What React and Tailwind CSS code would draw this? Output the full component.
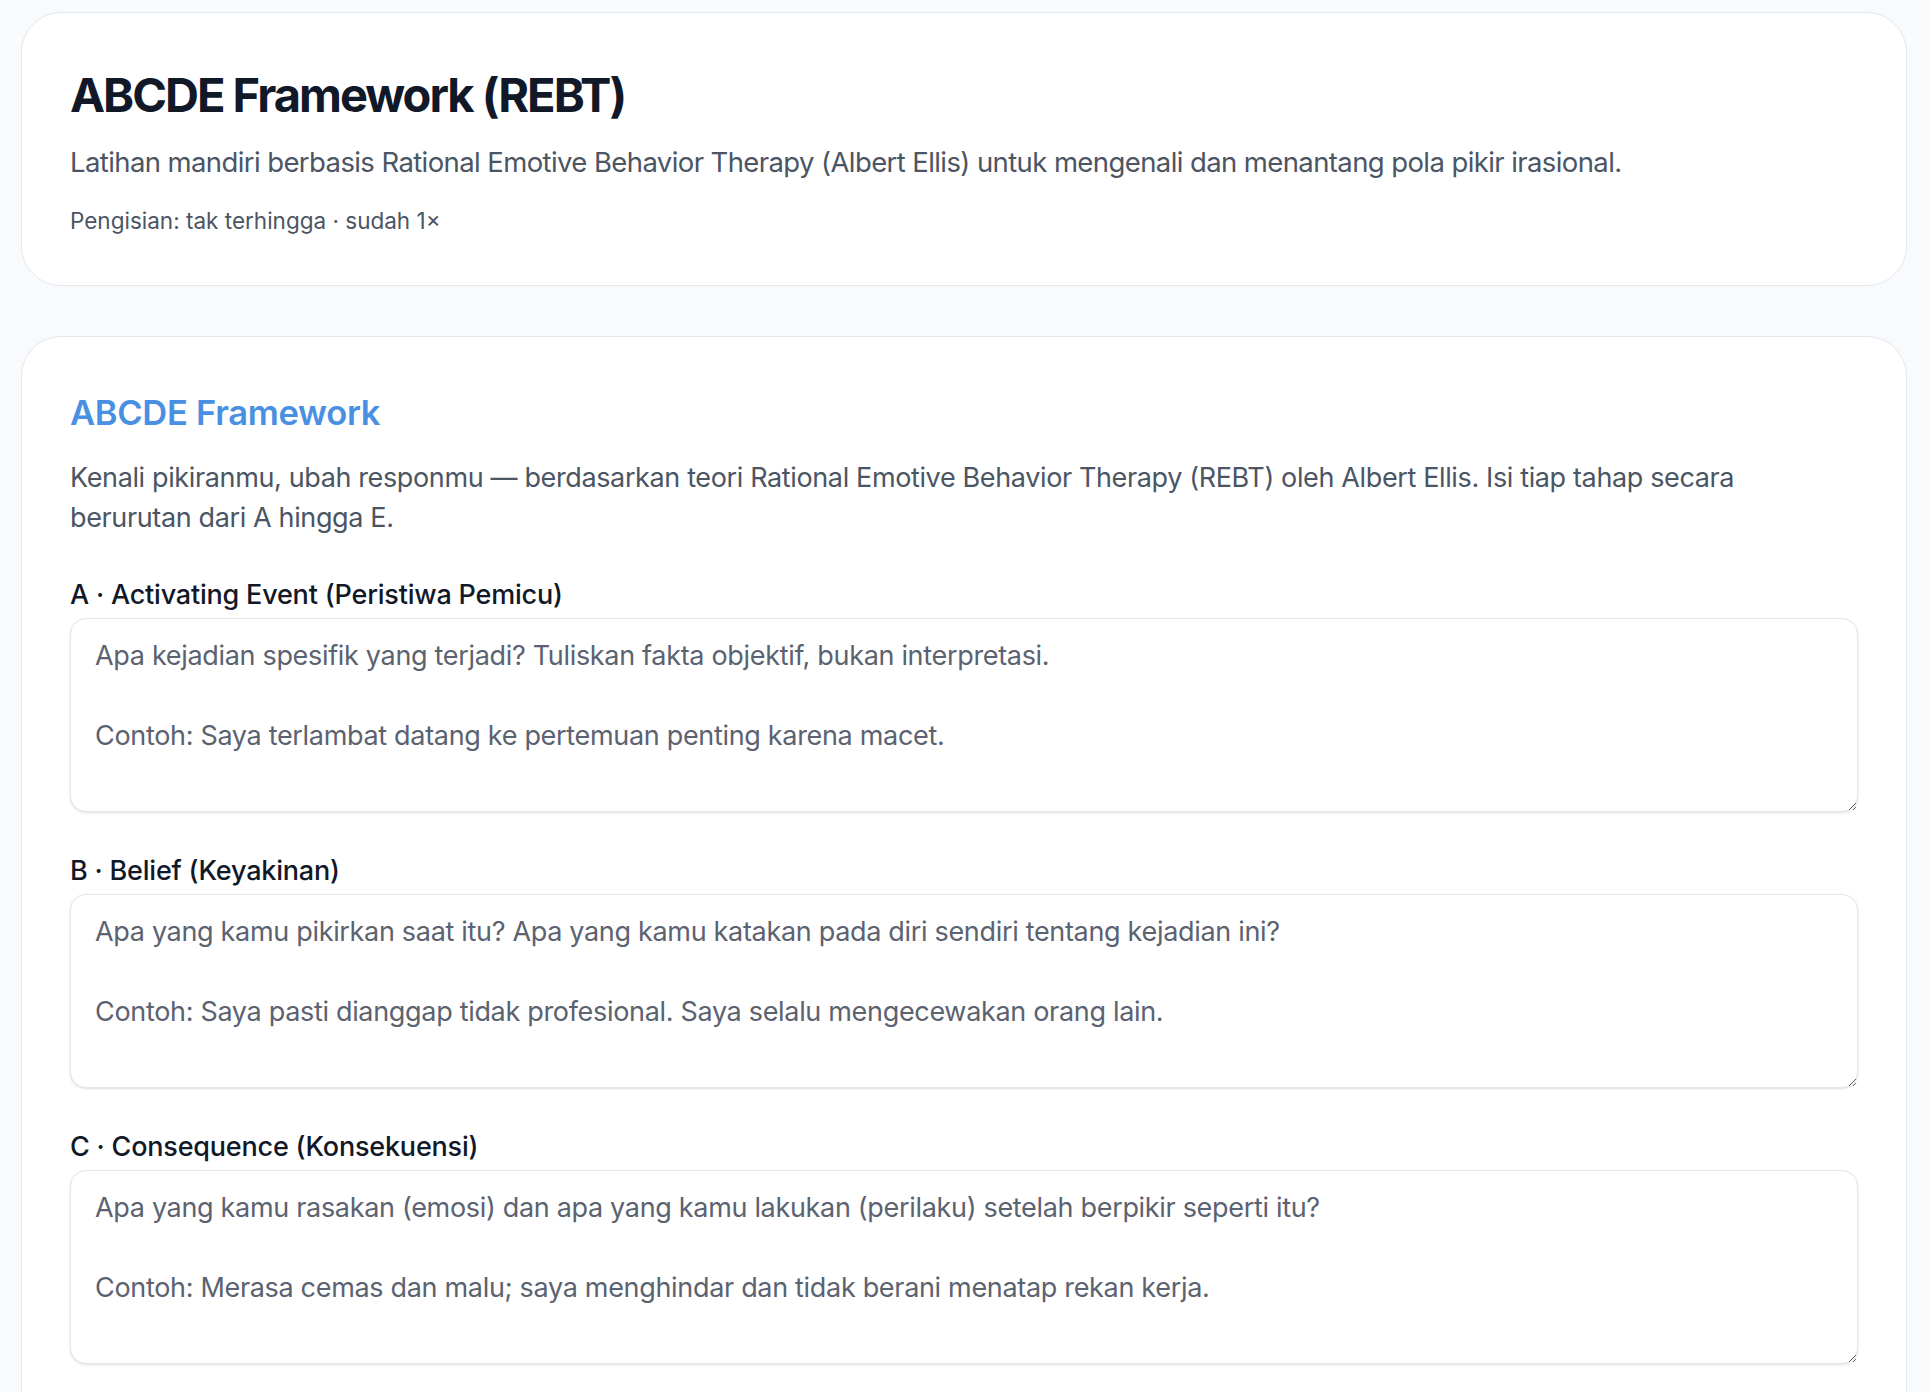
import React from "react";

const fields = [
  {
    label: "A · Activating Event (Peristiwa Pemicu)",
    placeholder:
      "Apa kejadian spesifik yang terjadi? Tuliskan fakta objektif, bukan interpretasi.\n\nContoh: Saya terlambat datang ke pertemuan penting karena macet.",
  },
  {
    label: "B · Belief (Keyakinan)",
    placeholder:
      "Apa yang kamu pikirkan saat itu? Apa yang kamu katakan pada diri sendiri tentang kejadian ini?\n\nContoh: Saya pasti dianggap tidak profesional. Saya selalu mengecewakan orang lain.",
  },
  {
    label: "C · Consequence (Konsekuensi)",
    placeholder:
      "Apa yang kamu rasakan (emosi) dan apa yang kamu lakukan (perilaku) setelah berpikir seperti itu?\n\nContoh: Merasa cemas dan malu; saya menghindar dan tidak berani menatap rekan kerja.",
  },
  {
    label: "D · Disputation (Perlawanan)",
    placeholder:
      "Tantang keyakinanmu. Apa buktinya? Apakah ada cara lain memandang kejadian ini?\n\nContoh: Terlambat sekali tidak membuat saya tidak profesional.",
  },
  {
    label: "E · Effective New Belief (Keyakinan Baru)",
    placeholder:
      "Apa keyakinan baru yang lebih rasional dan sehat?\n\nContoh: Saya bisa meminta maaf dan memperbaiki manajemen waktu saya.",
  },
];

export default function App() {
  return (
    <div
      className="min-h-screen bg-[#f8fafc] pl-[21px] pr-[23px] pt-[12px] pb-12"
      style={{ fontFamily: "Inter, 'Noto Sans', sans-serif" }}
    >
      <div className="rounded-[40px] border border-[#e2e8f0] bg-white px-12 pt-[54px] pb-[46px]">
        <h1 className="text-[47px] font-bold leading-[56px] tracking-[-2px] text-[#111827]">
          ABCDE Framework (REBT)
        </h1>
        <p className="mt-[19px] text-[27.5px] leading-[40px] tracking-[-0.6px] text-[#4b5563]">
          Latihan mandiri berbasis Rational Emotive Behavior Therapy (Albert Ellis) untuk mengenali dan menantang pola pikir irasional.
        </p>
        <p className="mt-[21px] text-[22.5px] leading-[36px] text-[#4b5563]">
          Pengisian: tak terhingga · sudah 1×
        </p>
      </div>

      <div className="mt-[50px] rounded-[40px] border border-[#e2e8f0] bg-white px-12 pt-[52px] pb-12">
        <h2 className="text-[34.5px] font-semibold leading-[48px] tracking-[-0.3px] text-[#4a90e2]">
          ABCDE Framework
        </h2>
        <p className="mt-[21px] text-[27px] leading-[40px] tracking-[-0.37px] text-[#4b5563]">
          Kenali pikiranmu, ubah responmu — berdasarkan teori Rational Emotive Behavior Therapy (REBT) oleh Albert Ellis. Isi tiap tahap secara berurutan dari A hingga E.
        </p>
        <div className="mt-[39px] flex flex-col gap-[41px]">
          {fields.map((f) => (
            <div key={f.label} className="flex flex-col">
              <label className="mb-[5px] text-[27px] font-medium leading-[36px] tracking-[-0.2px] text-[#111827]">
                {f.label}
              </label>
              <textarea
                rows={4}
                placeholder={f.placeholder}
                className="h-[194px] w-full rounded-[16px] border border-[#e2e8f0] bg-white px-6 pt-[17px] pb-[10px] text-[27px] leading-[40px] tracking-[-0.32px] text-[#111827] shadow-sm outline-none placeholder:text-[#5b6270]"
              />
            </div>
          ))}
        </div>
      </div>
    </div>
  );
}
